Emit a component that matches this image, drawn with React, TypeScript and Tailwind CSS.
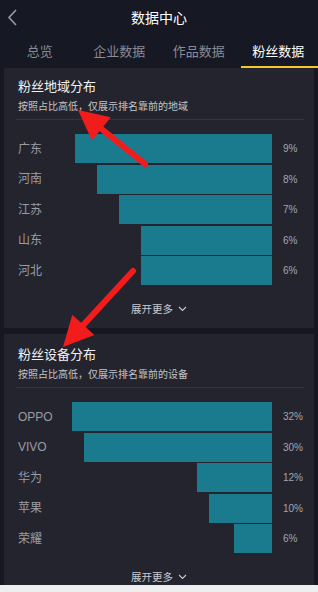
import React from "react";

type Row = { label: string; w: number; pct: string };

const region: Row[] = [
  { label: "广东", w: 197, pct: "9%" },
  { label: "河南", w: 175, pct: "8%" },
  { label: "江苏", w: 153, pct: "7%" },
  { label: "山东", w: 131, pct: "6%" },
  { label: "河北", w: 131, pct: "6%" },
];

const device: Row[] = [
  { label: "OPPO", w: 200, pct: "32%" },
  { label: "VIVO", w: 188, pct: "30%" },
  { label: "华为", w: 75, pct: "12%" },
  { label: "苹果", w: 63, pct: "10%" },
  { label: "荣耀", w: 38, pct: "6%" },
];

const font = { fontFamily: '"Noto Sans CJK SC", "Liberation Sans", sans-serif' };

function Card({ title, sub, rows, last }: { title: string; sub: string; rows: Row[]; last?: boolean }) {
  return (
    <div className={`mx-[4px] bg-[#23242e] ${last ? "h-[251px]" : "h-[260px]"} overflow-hidden`}>
      <div className={`pl-[14px] ${last ? "pt-[11px]" : "pt-[9px]"} text-[13px] leading-[18px] font-normal text-[#f2f2f4]`}>{title}</div>
      <div className="pl-[14px] mt-[4px] text-[10px] leading-[14px] text-[#c4c5cc]">{sub}</div>
      <div className="ml-[12px] mr-[10px] mt-[6px] h-px bg-[#34353f]" />
      <div className="mt-[14px] flex flex-col gap-[1.5px]">
        {rows.map((r) => (
          <div key={r.label} className="flex h-[29px] items-center pl-[14px]">
            <div className="flex-1 text-[12px] text-[#9b9ca4]" style={{ fontFamily: '"Liberation Sans", "Noto Sans CJK SC", sans-serif' }}>
              {r.label}
            </div>
            <div className="h-[29px] bg-[#1a7b8e]" style={{ width: r.w }} />
            <div className="w-[42px] pl-[11px] text-[10px] text-[#a4a5ac]" style={{ fontFamily: '"Liberation Sans", sans-serif' }}>
              {r.pct}
            </div>
          </div>
        ))}
      </div>
      <div className="mt-[17px] flex items-center justify-center gap-[5px] text-[10.5px] leading-[14px] text-[#c9cad0]">
        <span>展开更多</span>
        <svg width="9" height="6" viewBox="0 0 9 6">
          <polyline points="1,1 4.5,4.5 8,1" fill="none" stroke="#c9cad0" strokeWidth="1.1" />
        </svg>
      </div>
    </div>
  );
}

function Arrow({ x1, y1, x2, y2 }: { x1: number; y1: number; x2: number; y2: number }) {
  const dx = x2 - x1;
  const dy = y2 - y1;
  const len = Math.hypot(dx, dy);
  const ux = dx / len;
  const uy = dy / len;
  const hl = 30;
  const hw = 15;
  const bx = x2 - ux * hl;
  const by = y2 - uy * hl;
  const px = -uy;
  const py = ux;
  const pts = `${x2},${y2} ${bx + px * hw},${by + py * hw} ${bx - px * hw},${by - py * hw}`;
  return (
    <g>
      <line x1={x1} y1={y1} x2={bx + ux * 4} y2={by + uy * 4} stroke="#f21c1c" strokeWidth="6" strokeLinecap="round" />
      <polygon points={pts} fill="#f21c1c" />
    </g>
  );
}

export default function App() {
  return (
    <div className="relative w-[318px] h-[592px] overflow-hidden bg-[#161720]" style={font}>
      <div className="bg-[#161823]">
        <div className="relative flex h-[34px] items-center justify-center">
          <svg className="absolute left-[7px] top-[9px]" width="11" height="17" viewBox="0 0 11 17">
            <polyline points="9,1 2,8.5 9,16" fill="none" stroke="#9a9ba3" strokeWidth="1.6" />
          </svg>
          <span className="text-[14px] text-white">数据中心</span>
        </div>
        <div className="grid h-[34px] grid-cols-4">
          {["总览", "企业数据", "作品数据", "粉丝数据"].map((t, i) => (
            <div key={t} className="relative flex items-center justify-center">
              <span className={`text-[13px] ${i === 3 ? "text-white" : "text-[#8a8b93]"}`}>{t}</span>
              {i === 3 && <div className="absolute bottom-0 left-[2px] right-0 h-[2px] bg-[#f4c82a]" />}
            </div>
          ))}
        </div>
      </div>
      <div className="flex flex-col gap-[6px]">
        <Card title="粉丝地域分布" sub="按照占比高低，仅展示排名靠前的地域" rows={region} />
        <Card title="粉丝设备分布" sub="按照占比高低，仅展示排名靠前的设备" rows={device} last />
      </div>
      <div className="h-[7px] bg-[#eeeef0]" />
      <svg className="pointer-events-none absolute left-0 top-0" width="318" height="592">
        <Arrow x1={145} y1={164} x2={78} y2={110} />
        <Arrow x1={133} y1={271} x2={63} y2={347} />
      </svg>
    </div>
  );
}
